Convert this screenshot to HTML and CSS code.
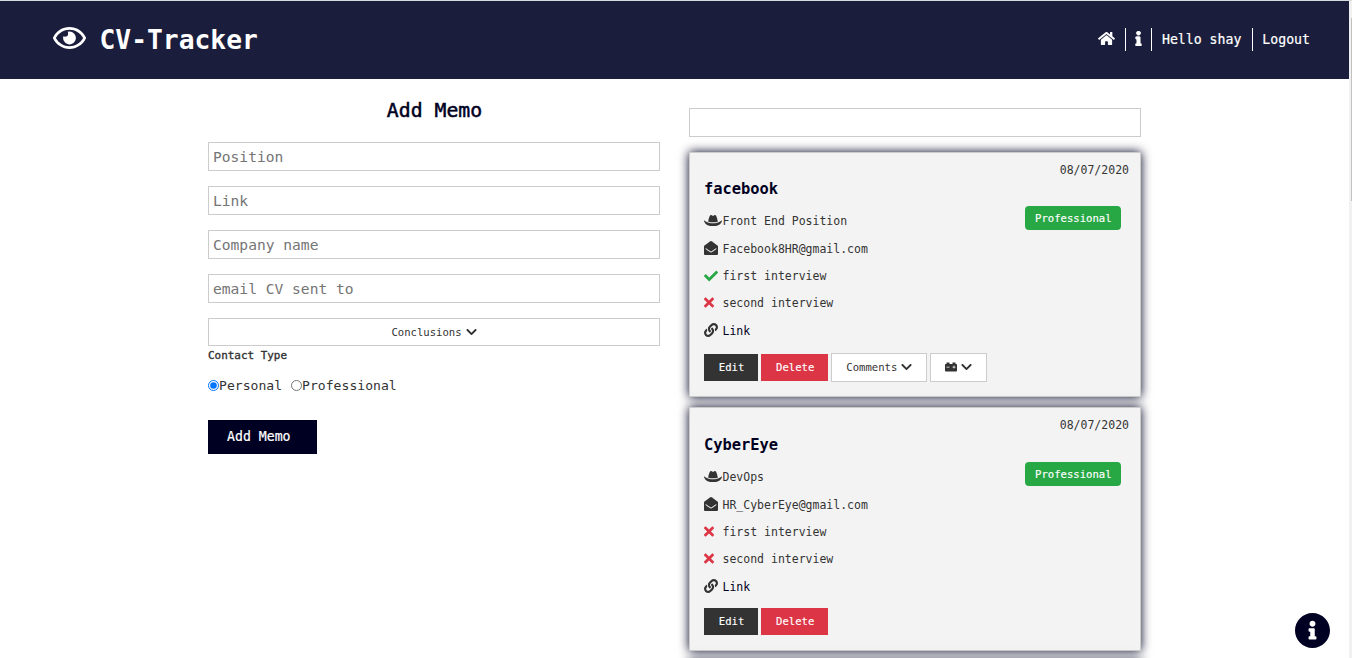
FILE: index.html
```html
<!DOCTYPE html>
<html lang="en">
<head>
<meta charset="utf-8">
<title>CV-Tracker</title>
<link rel="stylesheet" href="styles.css">
</head>
<body>
<svg class="sprite" aria-hidden="true">
  <symbol id="eye" viewBox="0 0 576 512"><path d="M288 144a110.94 110.94 0 0 0-31.24 5 55.4 55.4 0 0 1 7.24 27 56 56 0 0 1-56 56 55.4 55.4 0 0 1-27-7.24A111.71 111.71 0 1 0 288 144zm284.52 97.4C518.29 135.59 410.93 64 288 64S57.68 135.64 3.48 241.41a32.35 32.35 0 0 0 0 29.19C57.71 376.41 165.07 448 288 448s230.32-71.64 284.52-177.41a32.35 32.35 0 0 0 0-29.19zM288 400c-98.65 0-189.09-55-237.93-144C98.91 167 189.34 112 288 112s189.09 55 237.93 144C477.1 345 386.66 400 288 400z"/></symbol>
  <symbol id="home" viewBox="0 0 576 512"><path d="M280.37 148.26L96 300.11V464a16 16 0 0 0 16 16l112.06-.29a16 16 0 0 0 15.92-16V368a16 16 0 0 1 16-16h64a16 16 0 0 1 16 16v95.64a16 16 0 0 0 16 16.05L464 480a16 16 0 0 0 16-16V300L295.67 148.26a12.19 12.19 0 0 0-15.3 0zM571.6 251.47L488 182.56V44.05a12 12 0 0 0-12-12h-56a12 12 0 0 0-12 12v72.61L318.47 43a48 48 0 0 0-61 0L4.34 251.47a12 12 0 0 0-1.6 16.9l25.5 31A12 12 0 0 0 45.15 301l235.22-193.74a12.19 12.19 0 0 1 15.3 0L530.9 301a12 12 0 0 0 16.9-1.6l25.5-31a12 12 0 0 0-1.7-16.93z"/></symbol>
  <symbol id="info" viewBox="0 0 192 512"><path d="M20 424.229h20V279.771H20c-11.046 0-20-8.954-20-20V212c0-11.046 8.954-20 20-20h112c11.046 0 20 8.954 20 20v212.229h20c11.046 0 20 8.954 20 20V492c0 11.046-8.954 20-20 20H20c-11.046 0-20-8.954-20-20v-47.771c0-11.046 8.954-20 20-20zM96 0C56.235 0 24 32.235 24 72s32.235 72 72 72 72-32.235 72-72S135.764 0 96 0z"/></symbol>
  <symbol id="info-circle" viewBox="8 8 496 496"><path d="M256 8C119.043 8 8 119.083 8 256c0 136.997 111.043 248 248 248s248-111.003 248-248C504 119.083 392.957 8 256 8zm0 110c23.196 0 42 18.804 42 42s-18.804 42-42 42-42-18.804-42-42 18.804-42 42-42zm56 254c0 6.627-5.373 12-12 12h-88c-6.627 0-12-5.373-12-12v-24c0-6.627 5.373-12 12-12h12v-64h-12c-6.627 0-12-5.373-12-12v-24c0-6.627 5.373-12 12-12h64c6.627 0 12 5.373 12 12v100h12c6.627 0 12 5.373 12 12v24z"/></symbol>
  <symbol id="chevron" viewBox="0 0 448 512"><path d="M207.029 381.476L12.686 187.132c-9.373-9.373-9.373-24.569 0-33.941l22.667-22.667c9.357-9.357 24.522-9.375 33.901-.04L224 284.505l154.745-154.021c9.379-9.335 24.544-9.317 33.901.04l22.667 22.667c9.373 9.373 9.373 24.569 0 33.941L240.971 381.476c-9.373 9.372-24.569 9.372-33.942 0z"/></symbol>
  <symbol id="hat" viewBox="0 0 640 512"><path d="M490 296.9C480.51 239.51 450.51 64 392.3 64c-14 0-26.49 5.93-37 14a58.21 58.21 0 0 1-70.58 0c-10.51-8-23-14-37-14-58.2 0-88.2 175.47-97.71 232.88C188.81 309.47 243.73 320 320 320s131.23-10.51 170-23.1zm142.9-37.18a16 16 0 0 0-19.75 1.5c-1 .9-101.27 90.78-293.16 90.78-190.82 0-292.22-89.94-293.24-90.84A16 16 0 0 0 1 278.53C73.77 440.09 186.85 448 320 448s246.2-7.92 318.9-169.47a16 16 0 0 0-6-18.81z"/></symbol>
  <symbol id="mail" viewBox="0 0 512 512"><path d="M512 464c0 26.51-21.49 48-48 48H48c-26.51 0-48-21.49-48-48V200.724a48 48 0 0 1 18.387-37.776c24.913-19.529 45.501-35.365 164.2-121.511C199.412 29.17 232.797-.347 256 .003c23.198-.354 56.596 29.172 73.413 41.433 118.687 86.137 139.303 101.995 164.2 121.512A48 48 0 0 1 512 200.724V464zm-65.666-196.605c-2.563-3.728-7.7-4.595-11.339-1.907-22.845 16.873-55.462 40.705-105.582 77.079-16.825 12.266-50.21 41.781-73.413 41.43-23.211.344-56.559-29.143-73.413-41.43-50.114-36.37-82.734-60.204-105.582-77.079-3.639-2.688-8.776-1.821-11.339 1.907l-9.072 13.196a7.998 7.998 0 0 0 1.839 10.967c22.887 16.899 55.454 40.69 105.303 76.868 20.274 14.781 56.524 47.813 92.264 47.573 35.724.242 71.961-32.771 92.263-47.573 49.85-36.179 82.418-59.97 105.303-76.868a7.998 7.998 0 0 0 1.839-10.967l-9.071-13.196z"/></symbol>
  <symbol id="check" viewBox="0 0 512 512"><path d="M173.898 439.404l-166.4-166.4c-9.997-9.997-9.997-26.206 0-36.204l36.203-36.204c9.997-9.998 26.207-9.998 36.204 0L192 312.69 432.095 72.596c9.997-9.997 26.207-9.997 36.204 0l36.203 36.204c9.997 9.997 9.997 26.206 0 36.204l-294.4 294.401c-9.998 9.997-26.207 9.997-36.204-.001z"/></symbol>
  <symbol id="times" viewBox="0 0 352 512"><path d="M242.72 256l100.07-100.07c12.28-12.28 12.28-32.19 0-44.48l-22.24-22.24c-12.28-12.28-32.19-12.28-44.48 0L176 189.28 75.93 89.21c-12.28-12.28-32.19-12.28-44.48 0L9.21 111.45c-12.28 12.28-12.28 32.19 0 44.48L109.28 256 9.21 356.07c-12.28 12.28-12.28 32.19 0 44.48l22.24 22.24c12.28 12.28 32.2 12.28 44.48 0L176 322.72l100.07 100.07c12.28 12.28 32.2 12.28 44.48 0l22.24-22.24c12.28-12.28 12.28-32.19 0-44.48L242.72 256z"/></symbol>
  <symbol id="link" viewBox="0 0 512 512"><path d="M326.612 185.391c59.747 59.809 58.927 155.698.36 214.59-.11.12-.24.25-.36.37l-67.2 67.2c-59.27 59.27-155.699 59.262-214.96 0-59.27-59.26-59.27-155.7 0-214.96l37.106-37.106c9.84-9.84 26.786-3.3 27.294 10.606.648 17.722 3.826 35.527 9.69 52.721 1.986 5.822.567 12.262-3.783 16.612l-13.087 13.087c-28.026 28.026-28.905 73.66-1.155 101.96 28.024 28.579 74.086 28.749 102.325.51l67.2-67.19c28.191-28.191 28.073-73.757 0-101.83-3.701-3.694-7.429-6.564-10.341-8.569a16.037 16.037 0 0 1-6.947-12.606c-.396-10.567 3.348-21.456 11.698-29.806l21.054-21.055c5.521-5.521 14.182-6.199 20.584-1.731a152.482 152.482 0 0 1 20.522 17.197zM467.547 44.449c-59.261-59.262-155.69-59.27-214.96 0l-67.2 67.2c-.12.12-.25.25-.36.37-58.566 58.892-59.387 154.781.36 214.59a152.454 152.454 0 0 0 20.521 17.196c6.402 4.468 15.064 3.789 20.584-1.731l21.054-21.055c8.35-8.35 12.094-19.239 11.698-29.806a16.037 16.037 0 0 0-6.947-12.606c-2.912-2.005-6.64-4.875-10.341-8.569-28.073-28.073-28.191-73.639 0-101.83l67.2-67.19c28.239-28.239 74.3-28.069 102.325.51 27.75 28.3 26.872 73.934-1.155 101.96l-13.087 13.087c-4.35 4.35-5.769 10.79-3.783 16.612 5.864 17.194 9.042 34.999 9.69 52.721.509 13.906 17.454 20.446 27.294 10.606l37.106-37.106c59.271-59.259 59.271-155.699.001-214.959z"/></symbol>
  <symbol id="battery" viewBox="0 0 512 512"><path d="M480 128h-32V80c0-8.84-7.16-16-16-16h-96c-8.84 0-16 7.16-16 16v48H192V80c0-8.84-7.16-16-16-16H80c-8.84 0-16 7.16-16 16v48H32c-17.67 0-32 14.33-32 32v256c0 17.67 14.33 32 32 32h448c17.67 0 32-14.33 32-32V160c0-17.67-14.33-32-32-32zM192 264c0 4.42-3.58 8-8 8H72c-4.42 0-8-3.58-8-8v-16c0-4.42 3.58-8 8-8h112c4.42 0 8 3.58 8 8v16zm256 0c0 4.42-3.58 8-8 8h-40v40c0 4.42-3.58 8-8 8h-16c-4.42 0-8-3.58-8-8v-40h-40c-4.42 0-8-3.58-8-8v-16c0-4.42 3.58-8 8-8h40v-40c0-4.42 3.58-8 8-8h16c4.42 0 8 3.58 8 8v40h40c4.42 0 8 3.58 8 8v16z"/></symbol>
</svg>

<div class="viewport">
  <div class="page">
    <header class="navbar">
      <h1 class="brand"><svg class="brand-icon"><use href="#eye"/></svg>CV-Tracker</h1>
      <nav class="nav">
        <a class="nav-item"><svg class="home-icon"><use href="#home"/></svg></a>
        <a class="nav-item nav-info"><svg class="info-icon"><use href="#info"/></svg></a>
        <span class="nav-item">Hello shay</span>
        <a class="nav-item">Logout</a>
      </nav>
    </header>

    <main class="columns">
      <form class="memo-form">
        <h2 class="form-title">Add Memo</h2>
        <input class="field" type="text" placeholder="Position">
        <input class="field" type="text" placeholder="Link">
        <input class="field" type="text" placeholder="Company name">
        <input class="field" type="text" placeholder="email CV sent to">
        <button class="btn btn-outline btn-wide" type="button">Conclusions<svg class="chevron"><use href="#chevron"/></svg></button>
        <h5 class="group-title">Contact Type</h5>
        <div class="radios">
          <label class="radio"><input type="radio" name="type" checked>Personal</label>
          <label class="radio"><input type="radio" name="type">Professional</label>
        </div>
        <button class="submit" type="button">Add Memo</button>
      </form>

      <section class="memos">
        <input class="field filter" type="text" aria-label="Filter">
        <article class="card">
          <div class="card-top"><time class="date">08/07/2020</time></div>
          <h3 class="company">facebook</h3>
          <div class="card-body">
            <ul class="details">
              <li><span class="icon-box"><svg class="hat"><use href="#hat"/></svg></span>Front End Position</li>
              <li><span class="icon-box"><svg class="glyph"><use href="#mail"/></svg></span>Facebook8HR@gmail.com</li>
              <li><span class="icon-box ok"><svg class="glyph"><use href="#check"/></svg></span>first interview</li>
              <li><span class="icon-box no"><svg class="times"><use href="#times"/></svg></span>second interview</li>
              <li><span class="icon-box"><svg class="glyph"><use href="#link"/></svg></span><a class="link">Link</a></li>
            </ul>
            <span class="badge">Professional</span>
          </div>
          <div class="actions">
            <button class="btn btn-dark" type="button">Edit</button>
            <button class="btn btn-danger" type="button">Delete</button>
            <button class="btn btn-outline" type="button">Comments<svg class="chevron"><use href="#chevron"/></svg></button>
            <button class="btn btn-outline" type="button"><svg class="battery"><use href="#battery"/></svg><svg class="chevron"><use href="#chevron"/></svg></button>
          </div>
        </article>
        <article class="card card-compact">
          <div class="card-top"><time class="date">08/07/2020</time></div>
          <h3 class="company">CyberEye</h3>
          <div class="card-body">
            <ul class="details">
              <li><span class="icon-box"><svg class="hat"><use href="#hat"/></svg></span>DevOps</li>
              <li><span class="icon-box"><svg class="glyph"><use href="#mail"/></svg></span>HR_CyberEye@gmail.com</li>
              <li><span class="icon-box no"><svg class="times"><use href="#times"/></svg></span>first interview</li>
              <li><span class="icon-box no"><svg class="times"><use href="#times"/></svg></span>second interview</li>
              <li><span class="icon-box"><svg class="glyph"><use href="#link"/></svg></span><a class="link">Link</a></li>
            </ul>
            <span class="badge">Professional</span>
          </div>
          <div class="actions">
            <button class="btn btn-dark" type="button">Edit</button>
            <button class="btn btn-danger" type="button">Delete</button>
          </div>
        </article>
        <article class="card"></article>
      </section>
    </main>
  </div>
  <div class="scrollbar"><div class="thumb"></div></div>
  <a class="help"><svg><use href="#info-circle"/></svg></a>
</div>
</body>
</html>
```
FILE: styles.css
```css
* { box-sizing: border-box; }

body,
input,
button {
  font-family: "DejaVu Sans Mono", monospace;
}

body {
  margin: 0;
  color: #333;
  background: #fff;
  overflow: hidden;
}

h1, h2, h3, h5, ul { margin: 0; padding: 0; }

svg { display: block; flex: none; fill: currentColor; }

.sprite { display: none; }

.viewport {
  display: flex;
  position: relative;
  height: 658px;
  border-top: 1px solid #d5dbdc;
  overflow: hidden;
}

.page { flex: 1; }

/* header */
.navbar {
  display: flex;
  align-items: center;
  justify-content: space-between;
  height: 78px;
  padding: 0 29px 0 53px;
  background: #1a1e3c;
  color: #fff;
}

.brand {
  display: flex;
  align-items: center;
  gap: 13.5px;
  font-size: 26.3px;
  line-height: 1;
}

.brand-icon { width: 33px; height: 30px; margin-top: -4px; }

.nav { display: flex; margin-top: -1px; }

.nav-item {
  display: flex;
  align-items: center;
  height: 23px;
  padding: 0 10.5px 0 9.5px;
  font-size: 13.2px;
  -webkit-text-stroke: 0.2px currentColor;
}

.nav-item:last-child { padding-right: 10px; }
.nav-item + .nav-item { border-left: 1px solid #fff; }

.home-icon { width: 17px; height: 15px; margin-top: -2px; }
.nav-item.nav-info { padding: 0 9px; }
.info-icon { width: 7px; height: 15px; margin-top: -2px; stroke: currentColor; stroke-width: 24px; overflow: visible; }

/* page columns */
.columns {
  display: grid;
  grid-template-columns: 452px 452px;
  column-gap: 29px;
  padding-left: 208px;
}

.memo-form {
  display: flex;
  flex-direction: column;
  padding-top: 20px;
}

.form-title {
  margin-bottom: 19px;
  padding-left: 1px;
  color: #000022;
  font-size: 19.8px;
  font-weight: 400;
  line-height: 24px;
  text-align: center;
  -webkit-text-stroke: 0.5px currentColor;
}

.field {
  display: block;
  width: 100%;
  height: 29px;
  margin: 0 0 15px;
  padding: 0 4px;
  border: 1px solid #ccc;
  background: #fff;
  font-size: 14.6px;
}

.field::placeholder { color: #757575; }

.btn {
  display: flex;
  align-items: center;
  justify-content: center;
  height: 27px;
  margin: 0;
  padding: 0 14px 0 15px;
  border: 0;
  color: #fff;
  font-size: 10.6px;
  -webkit-text-stroke: 0.15px currentColor;
}

.btn-outline {
  height: 29px;
  padding: 0 14px;
  border: 1px solid #ccc;
  background: #fff;
  color: #333;
  gap: 4px;
  -webkit-text-stroke: 0;
}

.btn-wide { height: 28px; }
.btn-dark { width: 54px; background: #333; }
.btn-danger { background: #dc3545; }

.chevron { width: 11px; height: 12px; margin-top: -1px; }
.battery { width: 12px; height: 12px; margin-top: -1px; }

.group-title {
  margin-top: 3px;
  font-size: 10.95px;
  font-weight: 400;
  line-height: 14px;
  -webkit-text-stroke: 0.35px currentColor;
}

.radios {
  display: flex;
  gap: 9px;
  margin-top: 14px;
  font-size: 13.1px;
  line-height: 17px;
}

.radio { display: flex; align-items: center; }
.radio input { width: 11px; height: 11px; margin: 0; }

.submit {
  align-self: flex-start;
  width: 109px;
  height: 34px;
  margin-top: 26px;
  padding: 0 25px 1px 19px;
  border: 0;
  background: #000022;
  color: #fff;
  font-size: 13.2px;
  text-align: left;
  white-space: nowrap;
  -webkit-text-stroke: 0.2px currentColor;
}

/* memo cards */
.memos { padding-top: 29px; }

.card {
  height: 245px;
  margin-bottom: 10px;
  padding: 9px 11px 0 14px;
  border: 1px solid #ccc;
  background: #f3f3f3;
  box-shadow: 0 0 10px #000022;
}

.card-top { display: flex; justify-content: flex-end; height: 17px; }
.date { font-size: 11.5px; line-height: 16px; }

.company {
  color: #000022;
  font-size: 15.4px;
  line-height: 20px;
}

.card-body {
  display: flex;
  justify-content: space-between;
  align-items: flex-start;
  margin-top: 8px;
  padding-right: 8px;
}

.details {
  list-style: none;
  font-size: 11.5px;
}

.details li {
  display: flex;
  align-items: center;
  height: 27.4px;
}

.details li:first-child { height: 28px; }

.icon-box { width: 18.5px; }
.ok { color: #28a745; }
.no { color: #dc3545; }
.hat { width: 18px; height: 15px; margin-top: -1px; }
.glyph { width: 14px; height: 14px; margin-top: -1px; }
.times { width: 10px; height: 15px; margin-top: -2px; }
.link { color: #000022; }

.badge {
  display: flex;
  align-items: center;
  width: 96px;
  height: 24px;
  margin-top: -1px;
  padding: 0 0 0 10px;
  border-radius: 4px;
  background: #28a745;
  color: #fff;
  font-size: 10.6px;
  -webkit-text-stroke: 0.15px currentColor;
}

.actions {
  display: flex;
  align-items: center;
  gap: 3px;
  height: 29px;
  margin-top: 8.4px;
}

/* card whose actions have no dropdowns */
.card-compact { height: 244px; }
.card-compact .company { line-height: 22px; }
.card-compact .card-body { margin-top: 7px; }
.card-compact .actions { height: 27px; margin-top: 7.4px; }

/* page scrollbar */
.scrollbar {
  width: 3px;
  padding: 17px 0 0 2px;
  background: #f1f1f1;
}

.thumb { height: 183px; background: #c1c1c1; }

.help {
  position: absolute;
  right: 22px;
  bottom: 10px;
  color: #000022;
}

.help svg { width: 35px; height: 35px; }
```
